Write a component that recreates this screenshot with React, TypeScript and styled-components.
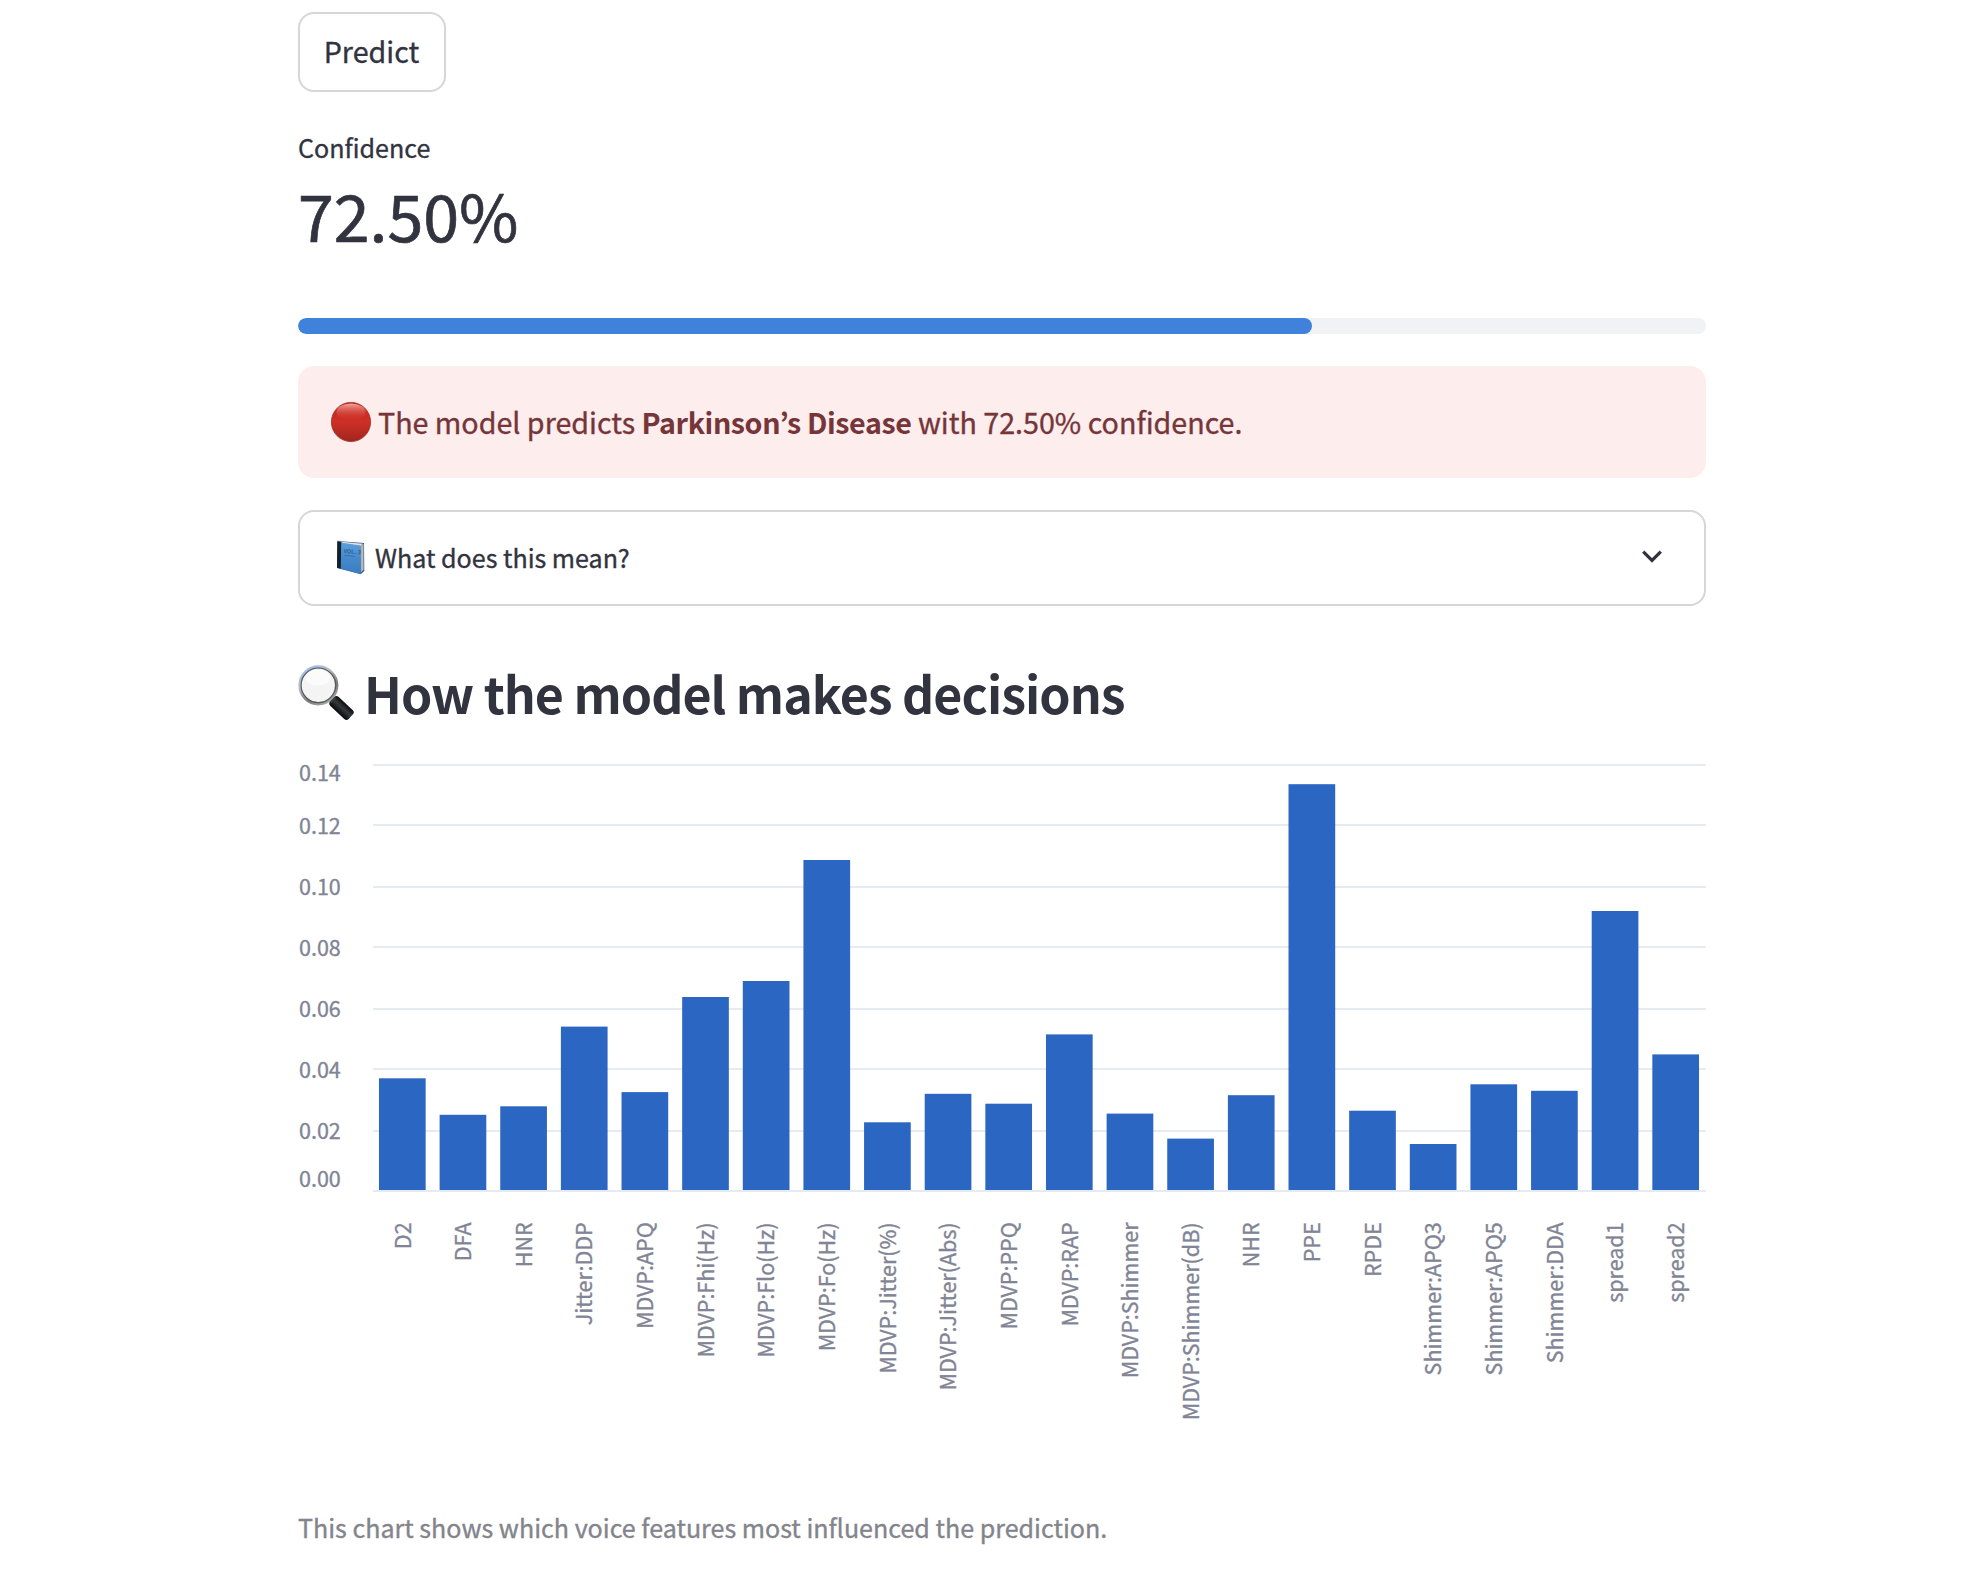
import React from "react";
import styled, { createGlobalStyle } from "styled-components";

const ink = "#31333f";
const muted = "#808495";
const family = '"Noto Sans CJK KR", "Open Sans", sans-serif';

const GlobalStyle = createGlobalStyle`
  * { box-sizing: border-box; }
  body {
    margin: 0;
    background: #ffffff;
    color: ${ink};
    font-family: ${family};
    -webkit-font-smoothing: antialiased;
    -webkit-text-stroke: 0.35px currentColor;
  }
`;

const Page = styled.main`
  width: 1408px;
  min-height: 1580px;
  margin-left: 298px;
  padding-top: 12px;
  display: flex;
  flex-direction: column;
  align-items: stretch;
`;

const PredictButton = styled.button`
  align-self: flex-start;
  width: 148px;
  height: 80px;
  padding: 0 1px 3px 0;
  border: 2px solid #d6d6d8;
  border-radius: 16px;
  background: #ffffff;
  color: ${ink};
  font-family: inherit;
  font-size: 28.65px;
  line-height: 51px;
`;

const Metric = styled.section`
  margin-top: 34px;
  display: flex;
  flex-direction: column;
  gap: 4px;
`;

const MetricLabel = styled.div`
  font-size: 25.07px;
  line-height: 42px;
`;

const MetricValue = styled.div`
  font-size: 64.5px;
  line-height: 84px;
  -webkit-text-stroke-width: 0.7px;
`;

const ProgressTrack = styled.div`
  margin-top: 62px;
  height: 16px;
  border-radius: 8px;
  background: #f0f2f6;
  overflow: hidden;
`;

const ProgressFill = styled.div<{ $percent: number }>`
  width: ${(p) => p.$percent}%;
  height: 100%;
  border-radius: 8px;
  background: #4081db;
`;

const Alert = styled.div`
  margin-top: 32px;
  height: 112px;
  padding-left: 33px;
  display: flex;
  align-items: center;
  gap: 6px;
  border-radius: 16px;
  background: #fdedec;
  color: #753539;
`;

const AlertText = styled.p`
  margin: 0;
  padding-bottom: 2px;
  font-size: 28.65px;
  line-height: 51px;
  white-space: nowrap;

  strong {
    letter-spacing: -0.4px;
    -webkit-text-stroke-width: 0;
  }
`;

const Expander = styled.div`
  margin-top: 32px;
  height: 96px;
  padding: 0 42px 2px 36px;
  display: flex;
  align-items: center;
  border: 2px solid #d6d6d8;
  border-radius: 16px;
`;

const ExpanderLabel = styled.span`
  flex: 1;
  margin-left: 10px;
  font-size: 25.07px;
  line-height: 42px;
`;

const Heading = styled.h3`
  margin: 52px 0 0;
  height: 68px;
  display: flex;
  align-items: center;
  gap: 8px;
  font-size: 50.1px;
  font-weight: 700;
  line-height: 68px;
  white-space: nowrap;
  -webkit-text-stroke-width: 0;
`;

const HeadingText = styled.span`
  letter-spacing: -0.96px;
`;

const HeadingIcon = styled.span`
  display: flex;
  padding-top: 3px;
`;

const Chart = styled.svg`
  display: block;
  margin-top: 14px;
`;

const AxisLabel = styled.text`
  fill: ${muted};
  -webkit-text-stroke: 0;
  stroke: ${muted};
  stroke-width: 0.35px;
  font-family: ${family};
  font-size: 21.5px;
`;

const Caption = styled.p`
  margin: 16px 0 0;
  color: #83848c;
  font-size: 25.07px;
  line-height: 42px;
`;

function RedCircle() {
  return (
    <svg width="41" height="40" viewBox="0 0 41 40" aria-hidden="true">
      <defs>
        <linearGradient id="redBody" x1="0" y1="0" x2="0" y2="1">
          <stop offset="0" stopColor="#c8281f" />
          <stop offset="0.5" stopColor="#cd3026" />
          <stop offset="1" stopColor="#9f261d" />
        </linearGradient>
        <linearGradient id="redShine" x1="0" y1="0" x2="0" y2="1">
          <stop offset="0" stopColor="#f3a7a1" />
          <stop offset="1" stopColor="#cd3026" stopOpacity="0" />
        </linearGradient>
      </defs>
      <circle cx="20" cy="20" r="19.6" fill="url(#redBody)" stroke="#a52a22" strokeWidth="0.8" />
      <ellipse cx="20" cy="10" rx="14.5" ry="8.6" fill="url(#redShine)" />
    </svg>
  );
}

function BlueBook() {
  return (
    <svg width="29" height="35" viewBox="0 0 29 35" aria-hidden="true">
      <defs>
        <linearGradient id="cover" x1="0" y1="0" x2="0" y2="1">
          <stop offset="0" stopColor="#5ea0dc" />
          <stop offset="0.5" stopColor="#4589cc" />
          <stop offset="1" stopColor="#3c7dc2" />
        </linearGradient>
      </defs>
      <path d="M1.5 1 L28 3 L28.3 31 L24.7 34.2 L1 28Z" fill="#2f6096" />
      <path d="M5.5 1.8 L27 3.7 L24.6 6 L6 3.4Z" fill="#e2e1dc" />
      <path d="M24.5 6.3 L27.4 3.8 L27.5 29.7 L24.7 32.3Z" fill="#c9c8c2" />
      <path d="M25.8 5.2 V31" stroke="#918f89" strokeWidth="0.6" />
      <path d="M4.7 2.5 L24.4 5.6 L24.7 34 L4.4 28.5Z" fill="url(#cover)" />
      <path d="M1.3 1.2 Q3.7 0.8 5.2 2.6 L4.8 28.8 L1 27.7Z" fill="#15202d" />
      <path d="M1.4 1.2 L5 1.4" stroke="#6e7984" strokeWidth="0.8" />
      <text
        x="7.4"
        y="13"
        fontFamily={family}
        fontSize="5.6"
        fontWeight="700"
        fill="#2b629d"
        transform="rotate(4 7.4 13)"
      >
        VOL. 3
      </text>
      <path d="M8.3 15.2 L19 16.5" stroke="#32699f" strokeWidth="0.8" />
    </svg>
  );
}

function Magnifier() {
  return (
    <svg width="58" height="58" viewBox="0 0 57 57" aria-hidden="true">
      <defs>
        <linearGradient id="rim" x1="0.2" y1="0" x2="0.8" y2="1">
          <stop offset="0" stopColor="#9fbde8" />
          <stop offset="0.3" stopColor="#b9c0c9" />
          <stop offset="0.7" stopColor="#77797b" />
          <stop offset="1" stopColor="#b0b0b0" />
        </linearGradient>
        <linearGradient id="grip" x1="0" y1="0" x2="0" y2="1">
          <stop offset="0" stopColor="#0b0d0e" />
          <stop offset="0.45" stopColor="#34393c" />
          <stop offset="1" stopColor="#08090a" />
        </linearGradient>
      </defs>
      <path d="M31.5 31.5 L37 37" stroke="#8a8c8e" strokeWidth="4" />
      <circle cx="20" cy="20" r="18" fill="#f4f4f4" stroke="url(#rim)" strokeWidth="3.4" />
      <circle cx="20" cy="20" r="17" fill="none" stroke="#55585b" strokeWidth="1.1" />
      <ellipse cx="19.5" cy="12.5" rx="12" ry="8" fill="#ffffff" opacity="0.65" />
      <g transform="translate(35.2 35.2) rotate(43)">
        <rect x="-2.2" y="-6" width="25" height="12" rx="3.2" fill="url(#grip)" />
        <path d="M-1 -3.5 V3.5" stroke="#3d4245" strokeWidth="1.2" />
      </g>
    </svg>
  );
}

function Chevron() {
  return (
    <svg width="20" height="14" viewBox="0 0 20 14" aria-hidden="true">
      <path d="M1.2 1.6 L10 10.4 L18.8 1.6" fill="none" stroke={ink} strokeWidth="3.2" />
    </svg>
  );
}

/* Vertical positions inside the 750px-tall plot. */
const BASE = 450;
const ticks = [
  { label: "0.14", line: 24, baseline: 41 },
  { label: "0.12", line: 84, baseline: 94 },
  { label: "0.10", line: 146, baseline: 155 },
  { label: "0.08", line: 206, baseline: 216 },
  { label: "0.06", line: 268, baseline: 277 },
  { label: "0.04", line: 328, baseline: 338 },
  { label: "0.02", line: 390, baseline: 399 },
  { label: "0.00", line: 450, baseline: 447 },
];

const features: { name: string; height: number }[] = [
  { name: "D2", height: 111.7 },
  { name: "DFA", height: 75.2 },
  { name: "HNR", height: 83.7 },
  { name: "Jitter:DDP", height: 163.4 },
  { name: "MDVP:APQ", height: 97.9 },
  { name: "MDVP:Fhi(Hz)", height: 193 },
  { name: "MDVP:Flo(Hz)", height: 209 },
  { name: "MDVP:Fo(Hz)", height: 330 },
  { name: "MDVP:Jitter(%)", height: 67.7 },
  { name: "MDVP:Jitter(Abs)", height: 96.2 },
  { name: "MDVP:PPQ", height: 86.3 },
  { name: "MDVP:RAP", height: 155.6 },
  { name: "MDVP:Shimmer", height: 76.4 },
  { name: "MDVP:Shimmer(dB)", height: 51.4 },
  { name: "NHR", height: 94.8 },
  { name: "PPE", height: 405.8 },
  { name: "RPDE", height: 79.3 },
  { name: "Shimmer:APQ3", height: 46 },
  { name: "Shimmer:APQ5", height: 105.7 },
  { name: "Shimmer:DDA", height: 99.2 },
  { name: "spread1", height: 279 },
  { name: "spread2", height: 135.6 },
];

const PLOT_LEFT = 74;
const STEP = 1334 / features.length;
const BAR = STEP * 0.77;

function ImportanceChart() {
  return (
    <Chart width="1408" height="750" viewBox="0 0 1408 750" role="img">
      {ticks.map((t) => (
        <g key={t.label}>
          <rect x="75" y={t.line} width="1333" height="2" fill="#e6eaf1" />
          <AxisLabel x="42.8" y={t.baseline} textAnchor="end">
            {t.label}
          </AxisLabel>
        </g>
      ))}
      {features.map((f, i) => {
        const center = PLOT_LEFT + STEP * (i + 0.5);
        return (
          <g key={f.name}>
            <rect
              x={center - BAR / 2}
              y={BASE - f.height}
              width={BAR}
              height={f.height}
              fill="#2b66c2"
            />
            <AxisLabel
              textAnchor="end"
              transform={`translate(${center + 8.2} 482.4) rotate(-90)`}
            >
              {f.name}
            </AxisLabel>
          </g>
        );
      })}
    </Chart>
  );
}

export default function App() {
  return (
    <>
      <GlobalStyle />
      <Page>
        <PredictButton>Predict</PredictButton>
        <Metric>
          <MetricLabel>Confidence</MetricLabel>
          <MetricValue>72.50%</MetricValue>
        </Metric>
        <ProgressTrack>
          <ProgressFill $percent={72} />
        </ProgressTrack>
        <Alert>
          <RedCircle />
          <AlertText>
            The model predicts <strong>Parkinson’s Disease</strong> with 72.50% confidence.
          </AlertText>
        </Alert>
        <Expander>
          <BlueBook />
          <ExpanderLabel>What does this mean?</ExpanderLabel>
          <Chevron />
        </Expander>
        <Heading>
          <HeadingIcon>
            <Magnifier />
          </HeadingIcon>
          <HeadingText>How the model makes decisions</HeadingText>
        </Heading>
        <ImportanceChart />
        <Caption>This chart shows which voice features most influenced the prediction.</Caption>
      </Page>
    </>
  );
}
